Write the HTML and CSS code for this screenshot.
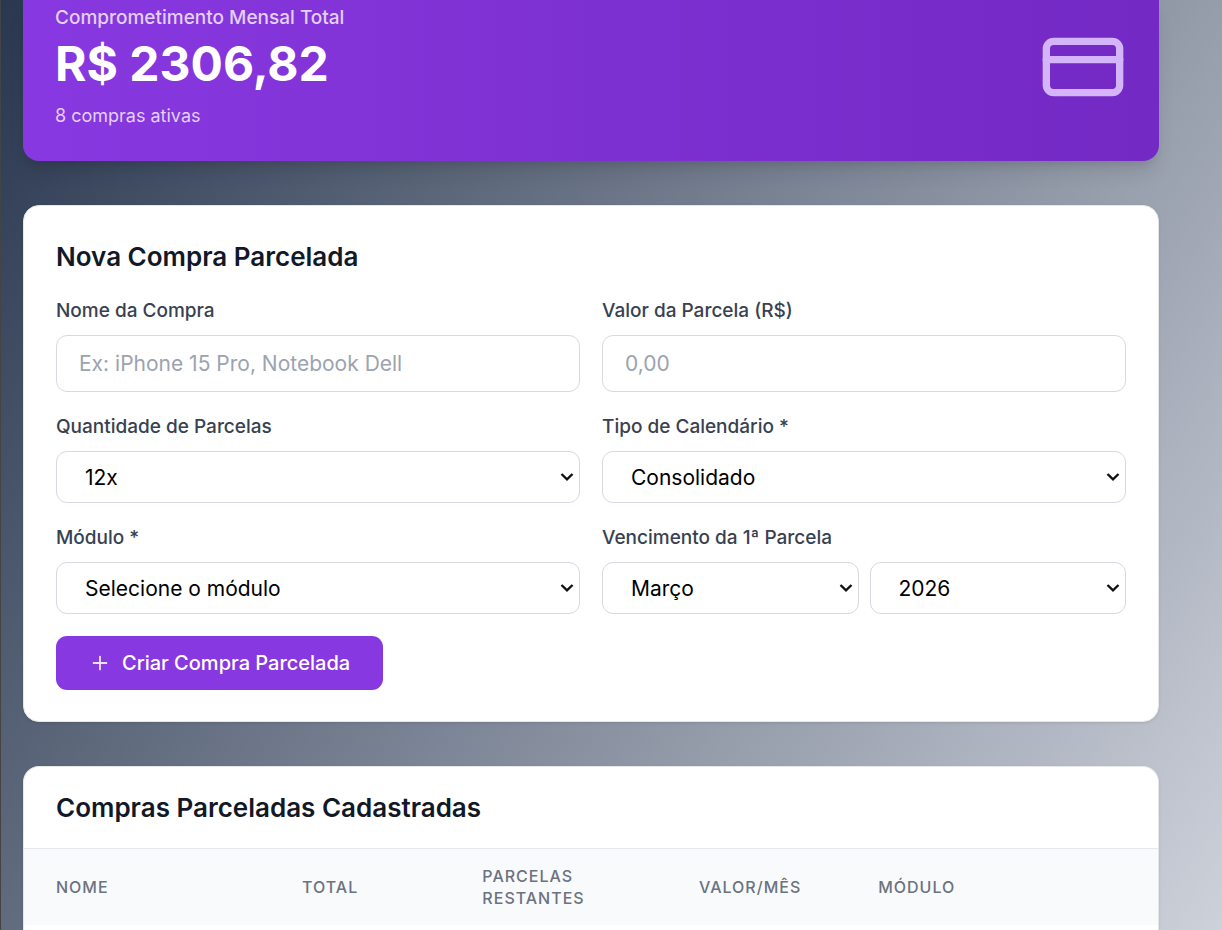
FILE: index.html
```html
<!DOCTYPE html>
<html lang="pt-BR">
<head>
    <meta charset="UTF-8">
    <meta name="viewport" content="width=device-width, initial-scale=1.0">
    <title>Compras Parceladas</title>
    <link rel="stylesheet" href="styles.css">
</head>
<body>
    <main class="page">
        <section class="summary">
            <div>
                <p class="summary-label">Comprometimento Mensal Total</p>
                <p class="summary-value">R$ 2306,82</p>
                <p class="summary-count">8 compras ativas</p>
            </div>
            <svg class="summary-icon" viewBox="0 0 24 24" fill="none" stroke="currentColor" stroke-width="2" stroke-linecap="round" stroke-linejoin="round" aria-hidden="true">
                <rect x="2" y="5" width="20" height="14" rx="2"/>
                <line x1="2" y1="10" x2="22" y2="10"/>
            </svg>
        </section>

        <section class="card form-card">
            <h2 class="card-title">Nova Compra Parcelada</h2>
            <form class="form">
                <div class="field">
                    <label for="nome">Nome da Compra</label>
                    <input type="text" id="nome" placeholder="Ex: iPhone 15 Pro, Notebook Dell">
                </div>
                <div class="field">
                    <label for="valor">Valor da Parcela (R$)</label>
                    <input type="text" id="valor" inputmode="decimal" placeholder="0,00">
                </div>
                <div class="field">
                    <label for="quantidade">Quantidade de Parcelas</label>
                    <select id="quantidade">
                        <option>12x</option>
                    </select>
                </div>
                <div class="field">
                    <label for="calendario">Tipo de Calendário *</label>
                    <select id="calendario">
                        <option>Consolidado</option>
                    </select>
                </div>
                <div class="field">
                    <label for="modulo">Módulo *</label>
                    <select id="modulo">
                        <option>Selecione o módulo</option>
                    </select>
                </div>
                <div class="field">
                    <label for="mes">Vencimento da 1ª Parcela</label>
                    <div class="due-date">
                        <select id="mes">
                            <option>Março</option>
                        </select>
                        <select id="ano" aria-label="Ano">
                            <option>2026</option>
                        </select>
                    </div>
                </div>
                <button type="submit" class="submit">
                    <svg class="plus" viewBox="0 0 24 24" fill="none" stroke="currentColor" stroke-width="2" stroke-linecap="round" aria-hidden="true">
                        <path d="M5 12h14M12 5v14"/>
                    </svg>
                    Criar Compra Parcelada
                </button>
            </form>
        </section>

        <section class="card list-card">
            <div class="list-header">
                <h2 class="card-title">Compras Parceladas Cadastradas</h2>
            </div>
            <table class="table">
                <colgroup>
                    <col class="col-nome">
                    <col class="col-total">
                    <col class="col-restantes">
                    <col class="col-valor">
                    <col>
                </colgroup>
                <thead>
                    <tr>
                        <th scope="col">Nome</th>
                        <th scope="col">Total</th>
                        <th scope="col">Parcelas Restantes</th>
                        <th scope="col">Valor/Mês</th>
                        <th scope="col">Módulo</th>
                    </tr>
                </thead>
            </table>
        </section>
    </main>
</body>
</html>
```
FILE: styles.css
```css
* {
    box-sizing: border-box;
}
body {
    margin: 0;
    border-left: 1px solid #444446;
    background: linear-gradient(124deg, #29374f, #cdd1da);
    font-family: Inter, "Liberation Sans", sans-serif;
    font-size: 21px;
    color: #111827;
}
p, h2 {
    margin: 0;
}
.page {
    display: flex;
    flex-direction: column;
    gap: 44px;
    min-height: 100vh;
    padding: 0 63px 0 22px;
}

/* Resumo mensal */
.summary {
    display: flex;
    justify-content: space-between;
    align-items: center;
    padding: 4px 32px 31px;
    border-radius: 0 0 16px 16px;
    background: linear-gradient(to right, #8838e0, #7329c4);
    box-shadow: 0 14px 20px -4px rgba(0, 0, 0, 0.1), 0 6px 8px -4px rgba(0, 0, 0, 0.1);
    color: #fff;
}
.summary-label {
    font-size: 19px;
    font-weight: 500;
    line-height: 28px;
    color: #e3d0fb;
}
.summary-value {
    margin: 5px 0 11px;
    font-size: 48px;
    font-weight: 700;
    line-height: 54px;
}
.summary-count {
    font-size: 18px;
    line-height: 28px;
    color: #e3d0fb;
}
.summary-icon {
    width: 88px;
    height: 88px;
    color: #d5b5f9;
}

.card {
    border: 1px solid #e5e7eb;
    border-radius: 16px;
    background: #fff;
    box-shadow: 0 1px 3px rgba(0, 0, 0, 0.1);
}
.card-title {
    font-size: 26px;
    font-weight: 600;
    line-height: 38px;
}

/* Formulário */
.form-card {
    padding: 32px 32px 31px;
}
.form {
    display: grid;
    grid-template-columns: 1fr 1fr;
    gap: 22px;
    margin-top: 22px;
}
.field label {
    display: block;
    margin-bottom: 11px;
    font-size: 19px;
    font-weight: 500;
    line-height: 26px;
    color: #374151;
}
input, select {
    width: 100%;
    border: 1px solid #d6d9df;
    border-radius: 11px;
    background-color: #fff;
    font: inherit;
    color: #000;
}
input {
    height: 57px;
    padding: 0 22px;
}
input::placeholder {
    color: #9ca3af;
}
select {
    height: 52px;
    padding: 0 28px;
    appearance: none;
    background-image: url("data:image/svg+xml,%3Csvg xmlns='http://www.w3.org/2000/svg' viewBox='0 0 14 10' fill='none' stroke='%23111' stroke-width='2.4'%3E%3Cpath d='M1.5 2 7 7.3 12.5 2'/%3E%3C/svg%3E");
    background-repeat: no-repeat;
    background-position: right 5px center;
    background-size: 14px 10px;
}
.due-date {
    display: grid;
    grid-template-columns: 1fr 1fr;
    gap: 11px;
}
.submit {
    display: flex;
    align-items: center;
    justify-self: start;
    gap: 11px;
    height: 54px;
    padding: 0 33px;
    border: 0;
    border-radius: 11px;
    background: #8838e0;
    font: inherit;
    font-size: 20px;
    font-weight: 500;
    color: #fff;
}
.plus {
    width: 22px;
    height: 22px;
    opacity: 0.85;
}

/* Lista de compras */
.list-card {
    flex: 1;
    border-bottom: 0;
    border-radius: 16px 16px 0 0;
    overflow: hidden;
}
.list-header {
    padding: 22px 32px 21px;
    border-bottom: 1px solid #e5e7eb;
}
.table {
    width: 100%;
    border-collapse: collapse;
    table-layout: fixed;
}
.table th {
    padding: 16px 32px;
    background: #f9fafc;
    font-size: 16px;
    font-weight: 500;
    line-height: 22px;
    letter-spacing: 1px;
    text-align: left;
    text-transform: uppercase;
    color: #6b7280;
}
.col-nome {
    width: 21.7%;
}
.col-total {
    width: 15.9%;
}
.col-restantes {
    width: 19.1%;
}
.col-valor {
    width: 15.8%;
}
```
